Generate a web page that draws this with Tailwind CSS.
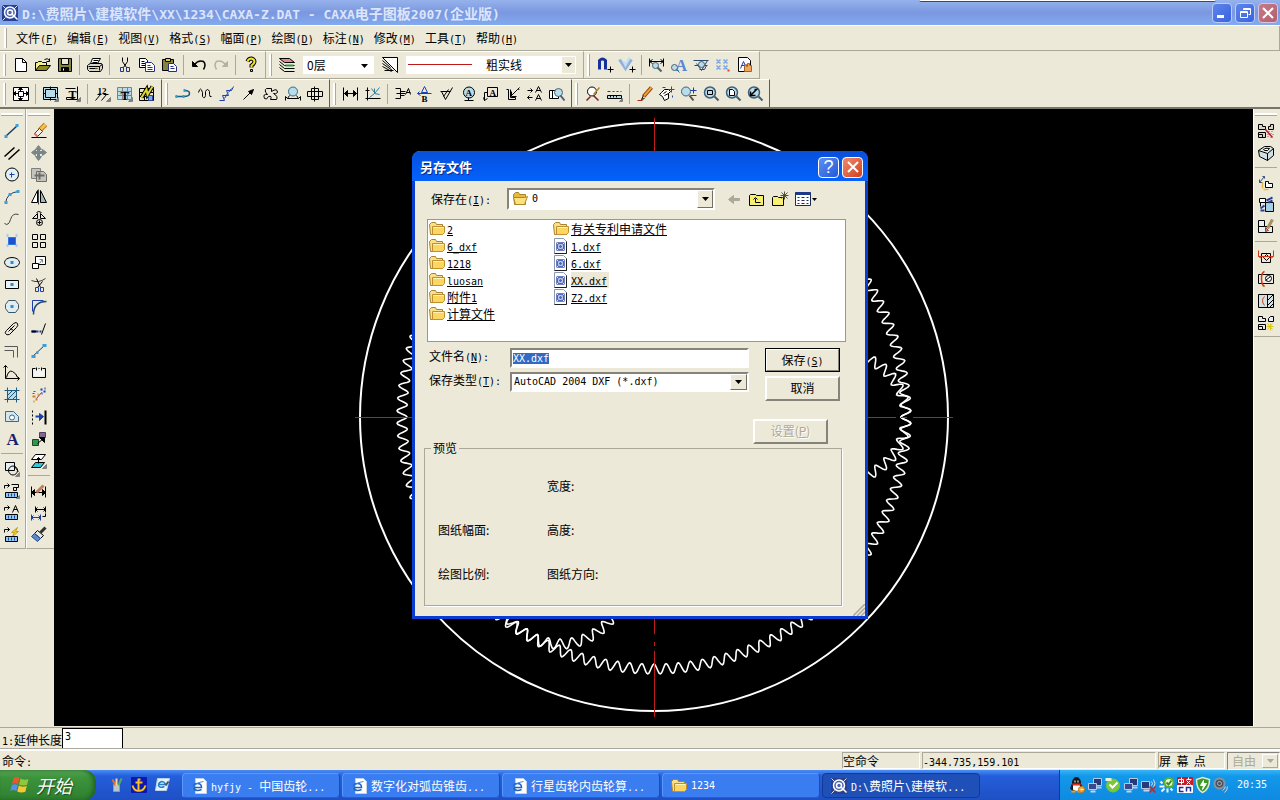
<!DOCTYPE html>
<html lang="zh-CN">
  <head>
    <meta charset="UTF-8" />
    <meta name="viewport" content="width=device-width, initial-scale=1.0" />
    <script src="https://cdn.jsdelivr.net/npm/@tailwindcss/browser@4"></script>
    <title>CAXA电子图板2007</title>
  </head>
  <body
    class="relative flex h-screen flex-col overflow-hidden bg-[#ece9d8] font-['Noto_Sans_CJK_SC',sans-serif] text-xs leading-4 text-black [&_small]:font-['DejaVu_Sans_Mono',monospace] [&_small]:text-[10px] [&_small]:leading-none [&_u]:underline-offset-1"
  >
    <!-- title bar -->
    <header
      class="flex h-[26px] shrink-0 items-center border-b border-white bg-linear-to-b from-[#96b2ec] via-[#7b97e0] to-[#82aaee] pr-0.5 pl-0.5"
    >
      <span data-icon="app" class="w-[18px]"></span>
      <h1
        class="flex-1 pl-0.5 text-sm leading-5 font-bold whitespace-nowrap text-[#dbe5fb] [&_small]:text-[13px]!"
      >
        <small>D:\</small>费照片<small>\</small>建模软件<small>\XX\1234\CAXA-Z.DAT - CAXA</small>电子图板<small>2007(</small>企业版<small>)</small>
      </h1>
      <div class="flex gap-[3px]">
        <button
          aria-label="最小化"
          class="flex size-5 items-center justify-center rounded-sm border border-[#b9cdf7] bg-linear-to-br from-[#5f85ea] to-[#3a62e0]"
        >
          <svg viewBox="0 0 14 14" class="size-3.5"><path d="M2 9h7v3H2z" fill="#fff" /></svg>
        </button>
        <button
          aria-label="还原"
          class="flex size-5 items-center justify-center rounded-sm border border-[#b9cdf7] bg-linear-to-br from-[#5f85ea] to-[#3a62e0]"
        >
          <svg viewBox="0 0 14 14" class="size-3.5">
            <path d="M5.500 4V2.500h7v6h-2M2.500 5.500h7v6h-7zM2.500 6.500h7M5.500 3.500h7" fill="none" stroke="#fff" />
          </svg>
        </button>
        <button
          aria-label="关闭"
          class="flex size-5 items-center justify-center rounded-sm border border-[#d6c6e4] bg-linear-to-br from-[#c8798a] to-[#b4606c]"
        >
          <svg viewBox="0 0 14 14" class="size-3.5">
            <path d="M2 2l10 10M12 2L2 12" stroke="#fff" stroke-width="2" />
          </svg>
        </button>
      </div>
    </header>
    <div class="absolute top-0 right-16 h-0.5 w-[297px] rounded-b-sm border-b border-[#2c4f62] bg-white"></div>

    <!-- menu -->
    <nav
      class="flex h-[25px] shrink-0 items-center gap-[9px] border-r border-b border-[#aca899] pl-1 whitespace-nowrap"
    >
      <span class="h-5 w-[3px] border-r border-[#aca899] bg-white"></span>
      <button>文件<small>(<u>F</u>)</small></button>
      <button>编辑<small>(<u>E</u>)</small></button>
      <button>视图<small>(<u>V</u>)</small></button>
      <button>格式<small>(<u>S</u>)</small></button>
      <button>幅面<small>(<u>P</u>)</small></button>
      <button>绘图<small>(<u>D</u>)</small></button>
      <button>标注<small>(<u>N</u>)</small></button>
      <button>修改<small>(<u>M</u>)</small></button>
      <button>工具<small>(<u>T</u>)</small></button>
      <button>帮助<small>(<u>H</u>)</small></button>
    </nav>

    <!-- toolbars -->
    <div class="flex h-7 shrink-0">
      <div class="flex items-center border-t border-r border-b border-t-white border-r-[#aca899] border-b-[#aca899] pr-[3px]" data-tools="grip new open save sep print sep cut copy paste sep undo redo sep help"></div>
      <div class="flex items-center border-t border-r border-b border-t-white border-r-[#aca899] border-b-[#aca899] pr-[7px]">
        <div class="flex items-center" data-tools="grip layers"></div>
        <div class="relative mx-[5px]">
          <select aria-label="图层" class="block h-[18px] w-[71px] appearance-none bg-white pl-1 text-xs leading-4">
            <option>0层</option>
          </select>
          <svg viewBox="0 0 7 4" class="pointer-events-none absolute top-2 right-1.5 h-1 w-[7px]"><path d="M0 0h7L3.5 4z" /></svg>
        </div>
        <div class="flex items-center" data-tools="lineset"></div>
        <div class="relative ml-[5px]">
          <select aria-label="线型" class="block h-[18px] w-[170px] appearance-none bg-white pl-20 text-xs leading-4">
            <option>粗实线</option>
          </select>
          <span class="pointer-events-none absolute top-2 left-0.5 h-px w-16 bg-[#c01818]"></span>
          <span class="pointer-events-none absolute top-px right-px flex h-4 w-[13px] items-center justify-center bg-[#ece9d8]">
            <svg viewBox="0 0 7 4" class="h-1 w-[7px]"><path d="M0 0h7L3.5 4z" /></svg>
          </span>
        </div>
      </div>
      <div class="flex items-center border-t border-r border-b border-t-white border-r-[#aca899] border-b-[#aca899] pr-[3px]" data-tools="grip magnet filter sep dimfind fontstyle dimstyle pointstyle pagehand"></div>
    </div>
    <div class="flex h-7 shrink-0">
      <div class="flex items-center border-t border-r border-t-white border-r-[#605e50] pr-[3px]" data-tools="grip frame sep frameset titleblk sep balloon bom bomfill"></div>
      <div class="flex items-center border-t border-r border-t-white border-r-[#605e50] pr-[3px]" data-tools="grip polyline wave zigzag arrow contour gearshape shaft"></div>
      <div class="flex items-center border-t border-r border-t-white border-r-[#605e50] pr-[3px]" data-tools="grip dimlin dimcoord sep chamfer datum rough target leader weld section partfind"></div>
      <div class="flex items-center border-t border-r border-t-white border-r-[#605e50] pr-[3px]" data-tools="grip erasefind measure sep pen pan zoomdyn zoomwin zoomall zoomprev"></div>
    </div>

    <!-- side tools and drawing canvas -->
    <main class="flex min-h-0 flex-1 border-t-2 border-[#77756a] bg-[#ece9d8]">
      <aside class="flex items-start bg-[#ece9d8]">
        <div class="flex w-[26px] flex-col items-center border-r border-b border-[#aca899] pr-0.5 pb-0.5" data-tools="vgrip line parallel circle arc spline point ellipse rect polygon slot offset axes hatch fillregion bigA vsep block tag1 tag2 tag3"></div>
        <div class="flex w-7 flex-col items-center border-b border-l border-[#aca899] border-l-white pr-1 pb-0.5" data-tools="vgrip eraser move copymove mirror rotate array scale trim fillet extend stretch breakit explode moveto palette layerswap vsep dimedit dimmove brush"></div>
      </aside>
      <div class="min-w-0 flex-1 bg-black">
        <svg viewBox="54 109 1199 617" class="block size-full">
          <circle cx="654" cy="417" r="294" fill="none" stroke="#fff" stroke-width="2" />
          <g id="gears" fill="none" stroke="#fff" stroke-width="1.6"></g>
          <path
            d="M654.5 118V634M654.5 642v4M654.5 651V717M355 417.5H896M901 417.5h6M913 417.5H953"
            stroke="#c01c1c"
            fill="none"
          />
        </svg>
      </div>
      <aside class="w-[27px] border-l border-white bg-[#ece9d8]">
        <div class="flex flex-col items-center border-b border-[#aca899] pr-0.5 pb-0.5" data-tools="vgrip libpick libdef vsep libdrive libset libedit vsep libclip librot libhatch libnew"></div>
      </aside>
    </main>

    <!-- command input -->
    <form class="mt-px flex h-[22px] shrink-0 items-center border-y border-t-[#aca899] border-b-[#aca899] pl-0.5">
      <label for="extend" class="pt-1"><small>1:</small>延伸长度</label>
      <input
        id="extend"
        value="3"
        class="h-full w-[61px] border-x border-t border-black bg-white px-0.5 pb-1 font-['DejaVu_Sans_Mono',monospace] text-[10px] leading-3 outline-none"
      />
    </form>
    <footer class="flex h-[21px] shrink-0 items-center gap-0.5 border-t-2 border-white whitespace-nowrap">
      <span class="flex-1 pl-0.5">命令<small>:</small></span>
      <span class="h-[17px] w-[78px] border border-[#aca899] border-r-white border-b-white leading-4">空命令</span>
      <span class="h-[17px] w-[234px] border border-[#aca899] border-r-white border-b-white leading-4"><small>-344.735,159.101</small></span>
      <span class="h-[17px] w-[67px] border border-[#aca899] border-r-white border-b-white leading-4 whitespace-pre">屏  幕  点</span>
      <span class="relative">
        <select
          disabled
          aria-label="捕捉方式"
          class="block h-[18px] w-[53px] appearance-none border border-[#85837a] border-r-white border-b-white pl-1 text-xs leading-4 text-[#aca899] opacity-100"
        >
          <option>自由</option>
        </select>
        <span class="absolute top-0.5 right-0.5 flex h-3.5 w-4 items-center justify-center border border-white border-r-[#aca899] border-b-[#aca899] bg-[#ece9d8]">
          <svg viewBox="0 0 7 4" class="h-1 w-[7px]"><path d="M0 0h7L3.5 4z" fill="#aca899" /></svg>
        </span>
      </span>
    </footer>

    <!-- taskbar -->
    <div
      class="flex h-[30px] shrink-0 items-stretch bg-linear-to-b from-[#4a8df5] via-[#245edb] via-20% to-[#1f4fc4] whitespace-nowrap text-white"
    >
      <button
        class="flex w-24 items-center gap-1.5 rounded-r-xl bg-linear-to-b from-[#5aa657] via-[#3c943c] via-25% to-[#2f8030] pl-2.5 text-lg leading-6 italic shadow-[inset_-3px_0_4px_#226322] [text-shadow:1px_1px_1px_#1c4a1c]"
      >
        <svg viewBox="0 0 20 18" class="h-[18px] w-5 shrink-0">
          <path d="M3.500 2q3-2 6 0l-1.500 6q-3-1.500-6 0z" fill="#e8592b" />
          <path d="M10.500 2.500q3 2 8 .5l-1.500 6q-5 1-8-.5z" fill="#8fc73e" />
          <path d="M1.800 9q3-1.500 6 0L6.300 15q-3-2-6 0z" fill="#5a8df0" />
          <path d="M8.800 9.500q3 2 8 .5L15.200 16q-5 1-8-.5z" fill="#fbc62f" />
        </svg>
        开始
      </button>
      <div class="flex w-[86px] items-center gap-[7px] pl-3">
        <a href="#" data-icon="ql1" aria-label="画图"></a>
        <a href="#" data-icon="ql2" aria-label="CAXA"></a>
        <a href="#" data-icon="ql3" aria-label="浏览器"></a>
      </div>
      <div class="flex flex-1 gap-0.5 pt-[3px] pb-0.5">
        <button class="flex w-[158px] items-center gap-1 rounded-sm border border-[#5a98fa] border-r-[#1c4cb8] border-b-[#2a5cd0] bg-[#3a7df0] pl-2">
          <span data-icon="ie"></span><span><small>hyfjy - </small>中国齿轮<small>...</small></span>
        </button>
        <button class="flex w-[158px] items-center gap-1 rounded-sm border border-[#5a98fa] border-r-[#1c4cb8] border-b-[#2a5cd0] bg-[#3a7df0] pl-2">
          <span data-icon="ie"></span><span>数字化对弧齿锥齿<small>...</small></span>
        </button>
        <button class="flex w-[158px] items-center gap-1 rounded-sm border border-[#5a98fa] border-r-[#1c4cb8] border-b-[#2a5cd0] bg-[#3a7df0] pl-2">
          <span data-icon="ie"></span><span>行星齿轮内齿轮算<small>...</small></span>
        </button>
        <button class="flex w-[158px] items-center gap-1 rounded-sm border border-[#5a98fa] border-r-[#1c4cb8] border-b-[#2a5cd0] bg-[#3a7df0] pl-2">
          <span data-icon="folder"></span><small>1234</small>
        </button>
        <button class="flex w-[158px] items-center gap-1 rounded-sm border border-[#163a92] bg-[#1e50b8] pl-2">
          <span data-icon="app"></span><span><small>D:\</small>费照片<small>\</small>建模软<small>...</small></span>
        </button>
      </div>
      <div
        class="flex items-center gap-0.5 border-l border-[#0c3c94] bg-linear-to-b from-[#35b4f6] via-[#1298ea] via-20% to-[#0f8ae0] pr-[13px] pl-[9px]"
      >
        <span data-icon="qq"></span><span data-icon="net"></span><span data-icon="safe"></span>
        <span data-icon="net"></span><span data-icon="netoff"></span><span data-icon="cert"></span>
        <span data-icon="ime"></span><span data-icon="shield"></span><span data-icon="sound"></span>
        <small class="pl-1.5">20:35</small>
      </div>
    </div>

    <!-- save dialog -->
    <section
      role="dialog"
      aria-labelledby="dlgTitle"
      class="absolute top-[151px] left-1/2 w-[456px] -translate-x-1/2 rounded-t-lg border-x-[3px] border-b-[3px] border-[#0a3cd0] bg-[#ece9d8]"
    >
      <div
        class="-mx-[3px] flex h-[30px] items-center gap-[3px] rounded-t-lg bg-linear-to-b from-[#0a50d8] via-[#0458ee] to-[#0462fa] pt-0.5 pr-[5px] pl-2"
      >
        <h2 id="dlgTitle" class="flex-1 text-[13px] leading-5 font-bold text-white [text-shadow:1px_1px_#0a2a90]">另存文件</h2>
        <button
          aria-label="帮助"
          class="flex size-[21px] items-center justify-center rounded-sm border border-white bg-linear-to-br from-[#5f8ff2] to-[#2458d8] font-['Liberation_Sans',sans-serif] text-lg leading-5 text-white"
        >
          ?
        </button>
        <button
          aria-label="关闭"
          class="flex size-[21px] items-center justify-center rounded-sm border border-white bg-linear-to-br from-[#ee8a6c] to-[#d03c14]"
        >
          <svg viewBox="0 0 14 14" class="size-3.5">
            <path d="M2 2l10 10M12 2L2 12" stroke="#fff" stroke-width="2" />
          </svg>
        </button>
      </div>

      <div class="mt-[7px] flex h-[22px] items-center pl-4">
        <label for="folder" class="w-[76px]">保存在<small>(<u>I</u>):</small></label>
        <div class="relative">
          <select
            id="folder"
            class="block h-[22px] w-[208px] appearance-none border-2 border-[#85837a] border-r-white border-b-white bg-white pl-[23px] font-['DejaVu_Sans_Mono',monospace] text-[10px] leading-4"
          >
            <option>0</option>
          </select>
          <span data-icon="folderopen" class="pointer-events-none absolute top-[3px] left-[5px]"></span>
          <span class="pointer-events-none absolute top-0.5 right-0.5 flex h-[18px] w-4 items-center justify-center border border-white border-r-[#716f64] border-b-[#716f64] bg-[#ece9d8]">
            <svg viewBox="0 0 7 4" class="h-1 w-[7px]"><path d="M0 0h7L3.5 4z" /></svg>
          </span>
        </div>
        <div class="flex gap-[7px] pl-[11px]">
          <button aria-label="后退" data-icon="back"></button>
          <button aria-label="向上一级" data-icon="upfolder"></button>
          <button aria-label="新建文件夹" data-icon="newfolder"></button>
          <button aria-label="查看" class="flex items-center gap-px">
            <span data-icon="views"></span>
            <svg viewBox="0 0 5 3" class="h-[3px] w-[5px]"><path d="M0 0h5L2.5 3z" /></svg>
          </button>
        </div>
      </div>

      <div class="mx-3 mt-[9px] mr-[19px] grid h-[123px] grid-cols-[124px_1fr] border border-[#7f9db9] bg-white pl-px">
        <ul>
          <li class="flex h-[17px] items-center gap-0.5"><span data-icon="folder"></span><a href="#" class="underline"><small>2</small></a></li>
          <li class="flex h-[17px] items-center gap-0.5"><span data-icon="folder"></span><a href="#" class="underline"><small>6_dxf</small></a></li>
          <li class="flex h-[17px] items-center gap-0.5"><span data-icon="folder"></span><a href="#" class="underline"><small>1218</small></a></li>
          <li class="flex h-[17px] items-center gap-0.5"><span data-icon="folder"></span><a href="#" class="underline"><small>luosan</small></a></li>
          <li class="flex h-[17px] items-center gap-0.5"><span data-icon="folder"></span><a href="#" class="underline">附件<small>1</small></a></li>
          <li class="flex h-[17px] items-center gap-0.5"><span data-icon="folder"></span><a href="#" class="underline">计算文件</a></li>
        </ul>
        <ul>
          <li class="flex h-[17px] items-center gap-0.5"><span data-icon="folder"></span><a href="#" class="underline">有关专利申请文件</a></li>
          <li class="flex h-[17px] items-center gap-0.5"><span data-icon="dxf"></span><a href="#" class="underline"><small>1.dxf</small></a></li>
          <li class="flex h-[17px] items-center gap-0.5"><span data-icon="dxf"></span><a href="#" class="underline"><small>6.dxf</small></a></li>
          <li class="flex h-[17px] items-center gap-0.5"><span data-icon="dxf"></span><a href="#" class="bg-[#ece9d8] pr-0.5 underline"><small>XX.dxf</small></a></li>
          <li class="flex h-[17px] items-center gap-0.5"><span data-icon="dxf"></span><a href="#" class="underline"><small>Z2.dxf</small></a></li>
        </ul>
      </div>

      <div class="mt-1.5 flex h-[53px] pr-[25px] pl-3.5">
        <div class="grid grid-cols-[81px_239px] grid-rows-[20px_20px] content-start gap-y-1">
          <label for="fname" class="leading-4">文件名<small>(<u>N</u>):</small></label>
          <input
            id="fname"
            value="XX.dxf"
            class="h-5 border-2 border-[#85837a] border-r-white border-b-white bg-white px-px font-['DejaVu_Sans_Mono',monospace] text-[10px] leading-3 outline-none selection:bg-[#316ac5] selection:text-white"
          />
          <label for="ftype" class="leading-4">保存类型<small>(<u>T</u>):</small></label>
          <div class="relative">
            <select
              id="ftype"
              class="block h-5 w-full appearance-none border-2 border-[#85837a] border-r-white border-b-white bg-white pl-0.5 font-['DejaVu_Sans_Mono',monospace] text-[10px] leading-4"
            >
              <option>AutoCAD 2004 DXF (*.dxf)</option>
            </select>
            <span class="pointer-events-none absolute top-0.5 right-0.5 flex h-4 w-[17px] items-center justify-center border border-white border-r-[#716f64] border-b-[#716f64] bg-[#ece9d8]">
              <svg viewBox="0 0 7 4" class="h-1 w-[7px]"><path d="M0 0h7L3.5 4z" /></svg>
            </span>
          </div>
        </div>
        <div class="flex flex-1 flex-col items-end gap-1">
          <button class="h-6 w-[75px] border border-black leading-4">
            <span class="block h-full border border-white border-r-[#85837a] border-b-[#85837a] leading-5">保存<small>(<u>S</u>)</small></span>
          </button>
          <button class="h-[25px] w-[75px] border-2 border-t-white border-r-[#85837a] border-b-[#85837a] border-l-white pb-0.5">取消</button>
        </div>
      </div>

      <div class="mt-[18px] flex justify-end pr-[37px]">
        <button
          disabled
          class="h-[25px] w-[75px] border-2 border-white border-r-[#85837a] border-b-[#85837a] pb-0.5 text-[#aca899] [text-shadow:1px_1px_#fff]"
        >
          设置(<u>P</u>)
        </button>
      </div>

      <fieldset class="mx-[9px] mr-[23px] -mt-1 mb-2.5 h-[166px] border border-[#aca899] px-[7px] shadow-[1px_1px_#fff]">
        <legend class="-ml-px px-0.5 leading-4">预览</legend>
        <dl class="grid grid-cols-[109px_1fr] gap-y-7 pt-[22px] pl-1.5 leading-4">
          <dt></dt>
          <dt>宽度:</dt>
          <dt>图纸幅面:</dt>
          <dt>高度:</dt>
          <dt>绘图比例:</dt>
          <dt>图纸方向:</dt>
        </dl>
      </fieldset>
      <svg viewBox="0 0 12 12" class="absolute right-0 bottom-0 size-3">
        <path d="M0 12L12 0M4 12L12 4M8 12L12 8" stroke="#aca899" stroke-width="1.500" />
      </svg>
    </section>

    <script>
      const K = "#000";
      const B = "#1c3fae";
      const L = "#b9dcea";
      const G = "#808080";
      // each shape: [path, stroke, fill, width]; text shapes start with "t"
      const icons = {
        app: [["M0 0H15V15H0Z", "#27408f", "#27408f"], ["M0 0L3 3M15 0L12 3M0 15L3 12", "#dfe6fa", "none", 1], ["M2 7a5.500 5.500 0 1 0 11 0a5.500 5.500 0 1 0-11 0", "#fff", "#4a62b0", 1.5], ["M5 7a2.500 2.500 0 1 0 5 0a2.500 2.500 0 1 0-5 0M10 9l5 5", "#fff", "none", 1.5]],
        new: [["M2 1H9L13 5V14H2Z", K, "#fff"], ["M9 1V5H13"]],
        open: [["M0 13V5H2L3 4H6L7 5H11V8", K, "#f4f08a"], ["M0 13L4 8H15L11 13Z", K, "#8a8a20"], ["M9 2Q12 0 14 3M14 1V4H11"]],
        save: [["M1 1H14V14H1Z", K, "#84843a"], ["M4 1H11V7H4Z", K, "#ece9d8"], ["M4 10H11V14H4Z", K, K], ["M6 11V13", "#fff"]],
        print: [["M5 1H13L10 6H3Z", K, "#fff"], ["M6 3H11M5 5H10"], ["M1 7L3 6H14L15 8V11L13 14H2L0 12V8Z", K, "#d8d6c8"], ["M1 9H12V13M12 9L15 7M2 11H10"], ["M8 11h1", "#c8b820", "none", 2]],
        cut: [["M5 0V4L9 10M10 0V4L6 10"], ["M3 10H6V14H3ZM9 10H12V14H9Z", "#25307f"]],
        copy: [["M0 1H6L8 3V10H0Z", K, "#fff"], ["M2 4H5M2 6H6M2 8H6"], ["M6 5H12L15 8V14H6Z", "#25307f", "#fff"], ["M8 8H11M8 10H13M8 12H13", "#25307f"]],
        paste: [["M1 2H12V13H1Z", K, "#84843a"], ["M4 1H9V4H4Z", K, "#d8d040"], ["M7 6H12L15 9V14H7Z", "#25307f", "#fff"], ["M9 9H12M9 11H13", "#25307f"]],
        undo: [["M1 4V9H6Z", K, K], ["M3 7Q7 2 12 4Q15 7 12 12", K, "none", 1.5]],
        redo: [["M14 4V9H9Z", "#b4b1a2", "#b4b1a2"], ["M12 7Q8 2 3 4Q0 7 3 12", "#b4b1a2", "none", 1.5]],
        help: [["M4 4Q5 1 8 1Q11 2 11 4Q11 6 8 8V10", K, "none", 4], ["M4 4Q5 1 8 1Q11 2 11 4Q11 6 8 8V10", "#f4e81c", "none", 2], ["M7 12H9V14H7Z", K, "#f4e81c"]],
        layers: [["M0 1H10L15 5H5Z", K, "#e88a8a"], ["M0 4L5 8H15M0 7L5 11H15M0 10L5 14H15"], ["M6 8H14", "#2f9a4a", "none", 2]],
        lineset: [["M0 0H15V15L0 0Z", K, "#fff"], ["M0 3L8 10M0 6L10 13M0 9L9 14M2 13H11"]],
        magnet: [["M2 12V3Q5 0 8 3V12", "#16329a", "none", 3], ["M13 9V15M10 12H16"]],
        filter: [["M0 2L6 11L12 2", "#8fb2dc", "none", 3], ["M4 4L6 8L10 0", "#c4dcf2", "none", 2], ["M13 9V15M10 12H16"]],
        dimfind: [["M0 1V9M14 1V9M0 4H14M3 2L0 4L3 6M11 2L14 4L11 6"], ["M3 8a3 3 0 1 0 6 0a3 3 0 1 0-6 0", "#4a6070", L], ["M8 10L12 14", "#4a6070", "none", 2]],
        fontstyle: [["t", "A", 4, 13, 16, "#5b86d4"], ["M0 10a3 3 0 1 0 6 0a3 3 0 1 0-6 0M5 12L8 15", "#4a6070", L]],
        dimstyle: [["M0 3H15M1 8H14M3 6L8 13L14 3M7 8H13L11 12H6", "#2a4a72"], ["M5 7a3 3 0 1 0 6 0a3 3 0 1 0-6 0", "#4a6070", L]],
        pointstyle: [["M1 2L5 6M5 2L1 6M8 2L12 6M12 2L8 6M1 8L5 12M5 8L1 12M8 8L12 12M12 8L8 12", "#7fa6e4", "none", 1.5], ["M13 12v2", "#e04020", "none", 2]],
        pagehand: [["M1 0H10L13 3V14H1Z", K, "#fff"], ["M3 11L6 4L9 11M4 8H8", B], ["M7 8V14H14V8H12V6H10V9H9V7Z", "#a4602a", "#f2a85a"]],
        frame: [["M0 1H15V14H0Z", K, "#fff"], ["M5 5H10V10H5ZM7 2V5M7 10V13M2 7H5M10 7H13"], ["M5 3H9L7 1ZM5 12H9L7 14ZM2 5V9L0 7ZM13 5V9L15 7Z", K, K]],
        frameset: [["M0 1H14V13H0Z", K, L], ["M2 3H12V11H2ZM7 0V3M7 11V14M0 7H2M12 7H14"], ["M15 11V15H11Z", G, G]],
        titleblk: [["M0 2H10M12 0V13H1V11H10"], ["t", "T", 3, 12, 12, K], ["M15 11V15H11Z", G, G]],
        balloon: [["t", "12", 2, 7, 9, K], ["M0 14L5 8M6 14L11 8M2 8H6M8 8H13"], ["M15 11V15H11Z", G, G]],
        bom: [["M0 1H14V13H0ZM0 5H14M0 9H14M5 1V13M10 1V13", G, L], ["t", "T", 3, 13, 13, K], ["M15 11V15H11Z", G, G]],
        bomfill: [["M0 2H14V14H0ZM0 6H14M0 10H14M5 2V14", K, "#e8e8c0"], ["M2 11L7 3L8 8L13 0", K, "none", 4], ["M2 11L7 3L8 8L13 0", "#e0d830", "none", 2], ["M9 9H13V14H9Z", "#2a4a9a", "#7aaae0"]],
        polyline: [["M0 10H8Q14 10 14 7Q14 4 9 4", "#1f5c84", "none", 1.5], ["M0 10h2M8 4h2M7 10h2", "#2aa8d0", "none", 3]],
        wave: [["M1 6Q3 -1 5 6V10Q7 13 8 9V5Q10 1 12 5V8Q12 11 14 10"]],
        zigzag: [["M0 14H5L3 9H9L7 4H12L14 0M5 12L8 7M9 6L12 2", B]],
        arrow: [["M2 13L10 5"], ["M12 3L10 8L7 5Z", K, K]],
        contour: [["M3 2H8V5Q14 1 14 6Q12 8 10 7Q15 10 13 13H7Q9 9 5 10Q3 14 1 12Q-1 7 4 8Q0 4 3 2Z"]],
        gearshape: [["M3 5a4.500 4.500 0 1 0 9 0a4.500 4.500 0 1 0-9 0", "#2c6a90", L], ["M0 14V10L2 12H13L15 10V14M2 12L4 9M13 12L11 9"]],
        shaft: [["M0 5H15V10H0ZM4 2H11V13H4ZM7 0V15"]],
        dimlin: [["M0 1V14M14 1V14M0 7H14", K, "none", 1], ["M4 4L1 7L4 10ZM10 4L13 7L10 10Z", K, K]],
        dimcoord: [["M2 1V14M0 12H15M0 4H4", K], ["M4 11L9 7L14 1M9 2L9 7L14 8", "#2c7fa8", "none", 1], ["M6 2L9 6", "#2c7fa8"]],
        chamfer: [["M0 2H5V12H0M5 5H10M5 9H9M1 7H10M10 8L13 2L15 8M11 6H15"]],
        datum: [["M7 0L4 6H10ZM0 7H14M2 5L0 7L3 9", B], ["t", "B", 4, 15, 9, K]],
        rough: [["M1 5H11M2 5L6 13L13 1M4 10L9 3"]],
        target: [["M2 6a5 5 0 1 0 11 0a5 5 0 1 0-11 0", K, L], ["t", "A", 4, 9, 9, K], ["M7 11V14M3 14H12"]],
        leader: [["M4 1H14V10H4ZM4 6H1V14M0 11L1 14L4 12"], ["t", "A", 6, 9, 9, K]],
        weld: [["M1 3H3V13H10V11H5V3M5 10L14 1M6 5V10H11"], ["M12 3h2", B]],
        section: [["M0 4H5M3 2L5 4L3 6M0 11H5M2 9L0 11L2 13M8 6L11 0L14 6M9 4H13M8 14L11 8L14 14M9 12H13"]],
        partfind: [["M0 4H9V12H0ZM3 4V12", K, "#fff"], ["M5 6a4 4 0 1 0 8 0a4 4 0 1 0-8 0", "#4a6070", L], ["M11 9L15 14", "#4a6070", "none", 2]],
        erasefind: [["M2 5a4 4 0 1 0 9 0a4 4 0 1 0-9 0", K, "#fff"], ["M14 1L8 8", "#b8862a", "none", 1.5], ["M8 9L13 14M1 14L5 10", "#7a2420", "none", 1.5]],
        measure: [["M0 5h3M5 5h2M9 5h2M13 5h1", B, "none", 1], ["M0 9H14V12H0ZM3 9V11M6 9V11M9 9V11", K, L], ["M15 12V15H12Z", G, G]],
        pen: [["M14 1L6 10", "#8a3a10", "none", 4], ["M14 1L6 10", "#f0a030", "none", 2], ["M6 9L4 13L7 12", K, "#f4d8b0"], ["M0 14H5", "#b02818"]],
        pan: [["M2 6L5 3H9L11 5L9 7V12L5 14L3 10L0 8ZM4 7L7 5M5 9L9 7", K, "#fff"], ["M12 0V6M9 3H15M6 1H3M13 9V11", "#2a4a9a"]],
        zoomdyn: [["M0 5a4 4 0 1 0 9 0a4 4 0 1 0-9 0", "#3f5f78", L], ["M8 9L12 14", "#5c4c40", "none", 2], ["M12 1V7M9 4H15M9 9H15", B]],
        zoomwin: [["M1 6a5.500 5.500 0 1 0 11 0a5.500 5.500 0 1 0-11 0", "#3f5f78", L, 1.5], ["M4 4H9V8H4Z"], ["M11 10L15 14", "#3f5f78", "none", 2]],
        zoomall: [["M1 6a5.500 5.500 0 1 0 11 0a5.500 5.500 0 1 0-11 0", "#3f5f78", L, 1.5], ["M4 3H7L9 5V9H4Z", K, "#fff"], ["M11 10L15 14", "#3f5f78", "none", 2]],
        zoomprev: [["M1 6a5.500 5.500 0 1 0 11 0a5.500 5.500 0 1 0-11 0", "#3f5f78", L, 1.5], ["M3 9L9 3L7 3M3 5V9H8", K, "none", 1.5], ["M11 10L15 14", "#3f5f78", "none", 2]],

        line: [["M1 13L13 2", "#1d3a5c", "none", 1.5], ["M0 13h3M11 2h3", "#37a0e0", "none", 3]],
        parallel: [["M0 11L10 2M4 14L15 4", K, "none", 1.5]],
        circle: [["M1 7a6.500 6.500 0 1 0 13 0a6.500 6.500 0 1 0-13 0", K, "#dff0f6"], ["M7 5V10M5 7H10", B]],
        arc: [["M1 14Q2 3 14 2", "#1d3a5c"], ["M0 13h3M4 5h3M12 2h3", "#37a0e0", "none", 3]],
        spline: [["M0 12Q4 15 6 8T14 3", "#404040", "none", 1]],
        point: [["M2 2h2M11 2h2M2 12h2M11 12h2", "#a8ccf0", "none", 3], ["M4 4H11V11H4Z", "#2a78e0", "#1c50d0"]],
        ellipse: [["M0 7a7.500 5 0 1 0 15 0a7.500 5 0 1 0-15 0", K, "#e0eef4"], ["M6 7h3", "#2a90d0", "none", 3]],
        rect: [["M1 3H14V11H1Z", K, "#e8f2f6"], ["M6 7h3", "#2a90d0", "none", 3]],
        polygon: [["M4 1H11L14 5V9L11 13H4L1 9V5Z", "#3c5462", "#e0eef4"], ["M6 7h3", "#2a90d0", "none", 3]],
        slot: [["M2 9L9 2Q12 0 13 2Q14 4 12 6L5 13Q2 14 1 12Q0 11 2 9ZM4 10L10 4M6 7L9 9"]],
        offset: [["M0 3H13V14M0 7H9V14", "#585858", "none", 1]],
        axes: [["M1 0V13H15M-1 2L1 0L3 2M13 11L15 13L13 15M2 12Q4 4 8 6T13 12"]],
        hatch: [["M3 0V15M12 0V15M0 3H15M0 12H15", "#1d5a80", "none", 1], ["M3 3H12V12H3Z", "#1d5a80", L], ["M3 8L8 3M3 12L12 3M8 12L12 8", "#1d5a80"]],
        fillregion: [["M1 2H9L14 7V12H1Z", "#3d6a84", "#d4e6ee"], ["M5 8a2.500 2.500 0 1 0 5 0a2.500 2.500 0 1 0-5 0", "#3d6a84", "#fff"]],
        bigA: [["t", "A", 2, 13, 17, "#16226e"]],
        block: [["M1 1H10V9H1Z", K, "#e4f0f4"], ["M4 9a4 4 0 1 0 9 0a4 4 0 1 0-9 0M10 5L14 10"], ["M15 11V15H11Z", G, G]],
        tag1: [["M0 5V2H5M3 0L5 2L3 4M7 1H14V4H9V7H12V4", K], ["M1 9H13V14H1Z", K, "#8ecbe8"], ["M4 10V13M7 10V13M10 10V13", B], ["M15 12V15H12Z", G, G]],
        tag2: [["M0 5V2H5M3 0L5 2L3 4M8 7L11 0L14 7M9 4H13", K], ["M1 9H13V14H1Z", K, "#8ecbe8"], ["M4 10V13M7 10V13M10 10V13", B]],
        tag3: [["M0 5V2H5M3 0L5 2L3 4", K], ["M13 0L7 5H10L8 9L14 4H11Z", "#c8a010", "#f4dc20"], ["M1 9H13V14H1Z", K, "#8ecbe8"], ["M4 10V13M7 10V13M10 10V13", B]],

        eraser: [["M0 14H15", K], ["M14 1L8 7", "#b87820", "none", 5], ["M14 1L8 7", "#f4c050", "none", 3], ["M8 5L3 10L6 13L11 8Z", "#404040", "#f4f0ec"], ["M3 10L6 13", "#e07070", "none", 2]],
        move: [["M7 2V13M2 7H13", "#7a858a", "none", 3], ["M4 4L7 0L10 4ZM4 11L7 15L10 11ZM4 4L0 7L4 10ZM11 4L15 7L11 10Z", "#7a858a", "#7a858a"]],
        copymove: [["M0 1H9V11H0Z", G, "#c4c4bc"], ["M5 4H12L15 7V14H5Z", "#6c6c68", "#c4c4bc"], ["M3 8H13M8 5V12", "#6c6c68", "none", 2]],
        mirror: [["M6 1V13H0Z", K, "#fff"], ["M9 1V13H15Z", K, "#a0b8c0"], ["M7 0V15", "#404040"]],
        rotate: [["M6 2L1 7H6ZM9 2L14 7H9ZM5 1Q7 -1 10 1"], ["M5 11a3 3 0 1 0 6 0a3 3 0 1 0-6 0M8 9V13M6 11H10"]],
        array: [["M1 1H6V6H1ZM9 1H14V6H9ZM1 9H6V14H1ZM9 9H14V14H9Z", K, "#f0eee0"]],
        scale: [["M4 1H14V9H4Z", K, "#fff"], ["M1 8H7V13H1Z", K, "#fff"], ["M8 8L11 4M8 4H11V7", G]],
        trim: [["M0 3Q7 6 14 1", "#404040"], ["M5 1L9 10M11 4L6 10"], ["M4 10H7V14H4ZM9 10H12V14H9Z", B]],
        fillet: [["M2 15Q2 2 15 2", "#1d4a70", "none", 1.5], ["M1 12V1H12", B]],
        extend: [["M0 10H4M5 10h2M8 10h2", B, "none", 2], ["M0 10H5", K, "none", 2], ["M10 13L14 2"]],
        stretch: [["M1 13L13 2", "#1d3a5c"], ["M0 13h4M5 9h2M11 2h4", "#37a0e0", "none", 3]],
        breakit: [["M2 4H13V11H2Z", "none", "#f4f6f4"], ["M4 3H1V12H14V3H11M5 5V2M10 5V2M7 3h1", K, "none", 1]],
        explode: [["M9 2h2M12 4h2M10 6h1M13 1h1", B, "none", 2], ["M1 9h3M4 12h2M2 14h1M6 7h1", "#d08020", "none", 2], ["M5 11L10 5M2 4h2M1 6h2", "#a03050"]],
        moveto: [["M1 1V3M1 5V7M1 9V11M1 13V15", K], ["M14 1V15", K, "none", 2], ["M4 7H9", B, "none", 2], ["M8 4V11L12 7Z", B, B]],
        palette: [["M8 1H14V6H8Z", "#504060", "#806890"], ["M1 8H7V14H1Z", "#204828", "#2f9a4a"], ["M6 12L12 7M8 6H13V11Z", K, K]],
        layerswap: [["M4 1H14L10 6H0Z", K, "#fff"], ["M4 9H13L9 14H0Z", K, "#30c8d8"], ["M7 4V10M5 6L7 4L9 6"], ["M15 11V15H11Z", G, G]],
        dimedit: [["M0 3V14M14 3V14M0 9H14"], ["M3 6L0 9L3 12ZM11 6L14 9L11 12Z", K, K], ["M12 2L5 9", "#c08060", "none", 3]],
        dimmove: [["M4 1V7M14 1V7M4 4H14M6 2L4 4L6 6M12 2L14 4L12 6"], ["M0 9V15M9 9V15M0 12H9M2 10L0 12L2 14M7 10L9 12L7 14", B], ["M14 8V11H11"]],
        brush: [["M14 0L9 5", "#303030", "none", 3], ["M6 3L12 8L9 11L3 6Z", K, "#e8e8e0"], ["M3 6L0 9L6 14L9 11Z", "#2a4a90", "#5a8ad0"]],

        libpick: [["M0 1H4V3H7V6H0ZM10 6V3H12V1H15V6ZM0 9H7V14H0ZM0 11H4V14", K, "#d8d8cc"], ["M7 6L14 14", "#b02030", "none", 1.5], ["M10 8h1M13 8h1M12 10h1M9 13h1M14 11h1M9 11h1M12 14h1", "#d04050"]],
        libdef: [["M0 5L6 1H12L15 3V10L9 15L1 11ZM0 5L9 8L15 3M9 8V15", K, "#cfe0e6"], ["M5 4Q7 2 11 3Q10 6 6 5Z", K, "#fff"]],
        libdrive: [["M1 7L6 1M1 4V7H4M4 1H6V3", "#305080"], ["M7 6H10V8H14V12H7Z", K, "#fff"], ["M4 7V13M5 14H10", "#e8b840", "none", 1.5]],
        libset: [["M1 1H7V5H1ZM2 5V9", K, "#fff"], ["M7 5H15V14H7Z", K, "#a8d0e4"], ["M8 3L14 0M10 5L14 3M2 11L6 8M2 13h4", "#22409a", "none", 2]],
        libedit: [["M0 1H6V7H14V13H0ZM0 7H6", K, "#e8f0f0"], ["M14 0L9 9", "#a8905c", "none", 3], ["M7 8L10 11L7 12Z", "#8a4040", "#e09080"]],
        libclip: [["M3 4H12V13H3Z", K, "#f4e4dc"], ["M5 8L8 5L11 8L8 11Z", K], ["M0 1V7H15V1M0 7L3 9M15 7L12 9", "#d03818", "none", 1]],
        librot: [["M0 3H15V12H0Z", K, "#f0ece0"], ["M7 7a3 3 0 1 0 6 0a3 3 0 1 0-6 0M7 9L12 5", K, "#fff"], ["M6 0Q3 1 3 7Q3 14 6 15M4 13L6 15", "#d03818", "none", 1.5]],
        libhatch: [["M0 1H15V14H0ZM9 1V14", K, "#d4e2e6"], ["M9 7L15 1M9 12L15 6M11 14L15 10"], ["M6 3Q2 7 6 12", "#d03818"]],
        libnew: [["M0 1H4V3H7V6H0ZM10 6V3L12 1H15V6ZM0 9H7V14H0ZM0 11H4V14", K, "#e8eef0"], ["M12 8V15M8 11H15M9 8L14 14M14 8L9 14", "#d8c818"]],

        folder: [["M0 3L2 1H6L7 3H13V13H1Z", "#a8842a", "#fae08a"], ["M3 5H15V11L13 13H3Z", "#c09030", "#fbd660"], ["M4 6H14", "#fff4b8"]],
        folderopen: [["M1 3L3 1H6L7 3H13V13H2Z", "#a8842a", "#e8b840"], ["M1 6H12L15 5L12 13H3Z", "#b08828", "#fbe27a"]],
        dxf: [["M1 0H10L13 3V15H1Z", "#8a98b0", "#fff"], ["M13 3V15H1", "#202020"], ["M3 4H11V12H3Z", "#7080c4", "#5068b8"], ["M5 8a2 2 0 1 0 4 0a2 2 0 1 0-4 0M3 4l2 2M11 4L9 6M3 12l2-2M11 12L9 10", "#e8ecfa"]],
        back: [["M2 8L7 4V7H13V9H7V12Z", "#aca899", "#aca899"]],
        upfolder: [["M0 4L1 3H6L7 4H14V14H0Z", K, "#f8f070"], ["M6 7V11H11M4 8L6 6L8 8", K, "none", 1]],
        newfolder: [["M0 6L1 5H5L6 6H11V14H0Z", K, "#f8f070"], ["M12 0V8M8 4H16M9 1L15 7M15 1L9 7", "#505030"]],
        views: [["M0 1H15V14H0Z", "#1c2a5a", "#fff"], ["M0 2H15", "#1c3a8a", "none", 3], ["M2 6h2M6 6h3M11 6h2M2 9h2M6 9h3M11 9h2M2 12h2M6 12h3M11 12h2", "#1c2a5a"]],
        ie: [["M4 0H12L15 3V15H4Z", "#c8d0dc", "#fff"], ["M2 9H10Q10 5 6 5Q2 5 2 9Q3 12 6 12Q8 12 10 11", "#1f62c0", "none", 1.5], ["M0 13Q2 4 12 3", "#3a90e0"]],
        ql1: [["M5 7H11V14H5Z", "#8aa0a0", "#b8c8c8"], ["M4 2L7 8", "#e07030", "none", 2], ["M8 1V8", "#f0d8a0", "none", 2], ["M13 1L10 8", "#58a858", "none", 2]],
        ql2: [["M0 0H15V15H0Z", "#0c18b0", "#0c18b0"], ["M7 1V13M4 5H11M1 8Q3 14 7 13Q12 14 14 8M6 2H9", "#f8c020", "none", 2]],
        ql3: [["M3 1H15L12 13H1Z", "#b4d4ec", "#e8f4fc"], ["M4 7H11Q10 4 7 4Q4 5 4 8Q5 11 10 9", "#2a80c8", "none", 1.5], ["M14 4L11 8", "#505060", "none", 2]],
        qq: [["M3 6Q3 0 7 0Q11 0 11 6L13 11L11 13H3L1 11Z", "#181818", "#181818"], ["M4 8Q7 6 10 8V12Q7 14 4 12Z", "#fff", "#fff"], ["M3 7H11", "#e03020", "none", 2], ["M2 14H6M8 14H11", "#f0a020", "none", 2], ["M5 4h1M8 4h1", "#fff", "none", 2], ["M9 12a3 3 0 1 0 6 0a3 3 0 1 0-6 0", "#c07818", "#f8a83c"], ["M11 12H14", "#fff"]],
        net: [["M6 1H14V8H6Z", "#b8c8e0", "#283878"], ["M8 10H14", "#b8c8e0", "none", 2], ["M1 6H9V12H1Z", "#b8c8e0", "#3a488c"], ["M3 14H8", "#c8d4e4", "none", 2]],
        safe: [["M1 8a6.500 6.500 0 1 0 13 0a6.500 6.500 0 1 0-13 0", "#7ac838", "#7ac838"], ["M0 2h6", "#e8f4d8", "none", 3], ["M4 7L7 10L12 5", "#fff", "none", 2]],
        netoff: [["M0 4H8V11H0Z", "#b8c8e0", "#283878"], ["M2 13H8", "#c8d4e4", "none", 2], ["M10 4Q12 6 10 8M12 2Q15 6 12 10", "#d4e4f4"], ["M8 9L14 15M14 9L8 15", "#d02020", "none", 1.5]],
        cert: [["M5 5a4.500 4.500 0 1 0 9 0a4.500 4.500 0 1 0-9 0", "#58b030", "#eaf8dc", 2], ["M7 5L9 7L12 3", "#3a9020", "none", 2], ["M1 4L3 6M0 9H5M2 14L5 11M8 15L8 11M13 13L11 11", "#f0f4f8", "none", 2]],
        ime: [["M0 0H15V8H0Z", "#c81c28", "#c81c28"], ["M0 8H15V15H0Z", "#fff", "#fff"], ["M1 2H6V5H1ZM4 0V7M9 2H14M11 0V2M9 7L13 3M13 7L9 3", "#fff"], ["M6 10H2V14H6M9 14V10H13V14", "#1c2c9c", "none", 1.5]],
        shield: [["M7 0L14 2Q14 12 7 15Q1 12 1 2Z", "#dcecc8", "#3f9a2c", 1.5], ["M8 3L5 8H8L7 12L11 6H8Z", "#fff", "#fff"]],
        sound: [["M1 6a5 5 0 1 0 10 0a5 5 0 1 0-10 0", "#8a94a0", "#4a5460", 2], ["M4 6a2 2 0 1 0 4 0a2 2 0 1 0-4 0", "#a8b4c0"], ["M12 9Q11 12 9 13M14 9Q14 13 11 15", "#c0d8f0"]],
      };

      function svg(name) {
        const shapes = icons[name].map((s) => {
          if (s[0] === "t") {
            return `<text x="${s[2]}" y="${s[3]}" font-size="${s[4]}" fill="${s[5]}" font-family="Liberation Serif, serif" font-weight="bold">${s[1]}</text>`;
          }
          const [d, stroke = K, fill = "none", width = 1] = s;
          return `<path d="${d}" stroke="${stroke}" fill="${fill}" stroke-width="${width}"/>`;
        });
        return `<svg viewBox="-0.5 -0.5 16 16" class="block size-4 overflow-visible" aria-hidden="true">${shapes.join("")}</svg>`;
      }

      const spacers = {
        grip: '<span class="mr-1 ml-[3px] h-[22px] w-[3px] border-r border-[#aca899] bg-white"></span>',
        sep: '<span class="mr-1 ml-[3px] h-5 w-px bg-[#aca899]"></span>',
        vgrip: '<span class="mt-1 mb-1 h-[3px] w-[22px] border-b border-[#aca899] bg-white"></span>',
        vsep: '<span class="mt-[3px] mb-1 h-px w-[22px] bg-[#aca899]"></span>',
      };

      document.querySelectorAll("[data-tools]").forEach((bar) => {
        bar.innerHTML = bar.dataset.tools
          .split(" ")
          .map((n) => spacers[n] || `<button aria-label="${n}" class="flex size-[22px] shrink-0 items-center justify-center">${svg(n)}</button>`)
          .join("");
      });
      document.querySelectorAll("[data-icon]").forEach((el) => {
        el.innerHTML = svg(el.dataset.icon);
      });

      // toothed outline around (cx, cy)
      function gear(cx, cy, r, amp, teeth, phase) {
        let d = "";
        const steps = teeth * 12;
        for (let i = 0; i <= steps; i++) {
          const a = (i / steps) * Math.PI * 2;
          const rr = r + amp * Math.sin(teeth * a + phase);
          d += (i ? "L" : "M") + (cx + rr * Math.cos(a)).toFixed(1) + " " + (cy + rr * Math.sin(a)).toFixed(1);
        }
        return `<path d="${d}Z"/>`;
      }
      document.getElementById("gears").innerHTML =
        gear(654, 417, 252, 5, 128, -1.57) +
        gear(843, 417, 63, 5, 32, -1.57) +
        gear(560, 580, 64, 5, 32, -1.57) +
        gear(560, 254, 64, 5, 32, -1.57);

      const fname = document.getElementById("fname");
      fname.focus();
      fname.select();
    </script>
  </body>
</html>
